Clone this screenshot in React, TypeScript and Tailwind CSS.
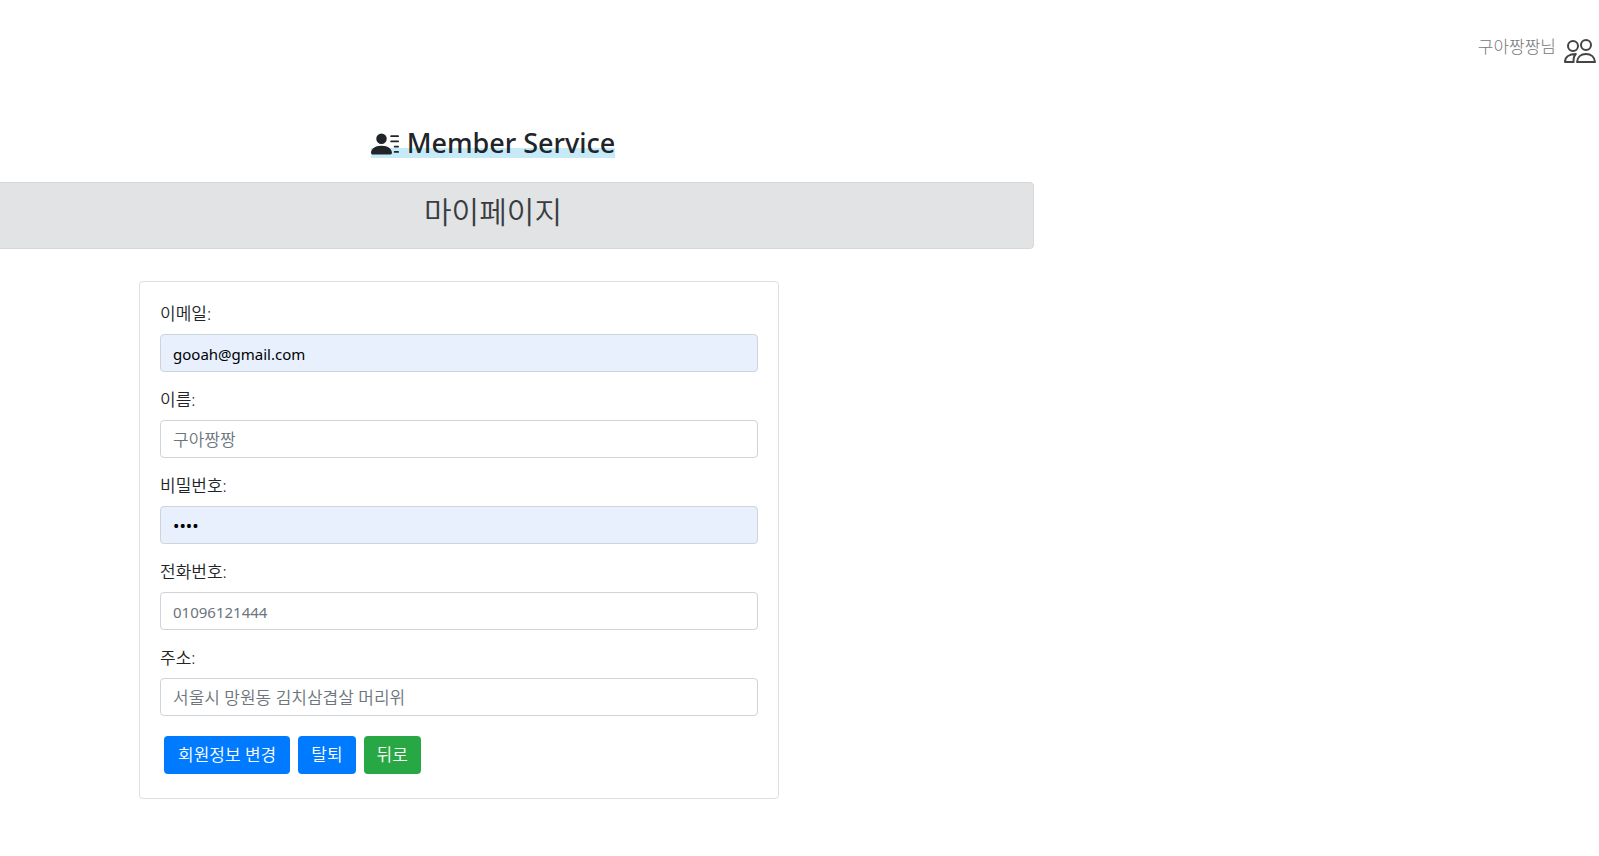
import { BsPersonLinesFill } from "react-icons/bs";

type Field = {
  id: string;
  label: string;
  type: string;
  value?: string;
  placeholder?: string;
  latin?: boolean;
};

const fields: Field[] = [
  { id: "email", label: "이메일:", type: "email", value: "gooah@gmail.com", latin: true },
  { id: "name", label: "이름:", type: "text", placeholder: "구아짱짱" },
  { id: "password", label: "비밀번호:", type: "password", value: "gooa" },
  { id: "phone", label: "전화번호:", type: "tel", placeholder: "01096121444", latin: true },
  { id: "address", label: "주소:", type: "text", placeholder: "서울시 망원동 김치삼겹살 머리위" },
];

function PeopleIcon() {
  return (
    <svg width="32" height="24" viewBox="0 0 32 24" fill="none" stroke="#444" strokeWidth="2" strokeLinejoin="round" aria-hidden="true">
      <circle cx="9" cy="7" r="5" />
      <circle cx="22" cy="6" r="5" />
      <path d="M9.6 23H1C1 18.2 4.8 15 11.8 15C10 17 9.2 19.6 9.6 23Z" />
      <path d="M13 23C13.4 18.2 16.8 15 22 15S30.6 18.2 31 23Z" />
    </svg>
  );
}

function FormField({ field }: { field: Field }) {
  return (
    <div className="mb-4">
      <label htmlFor={field.id} className="mb-2 block text-[17px] leading-6">
        {field.label}
      </label>
      <input
        id={field.id}
        type={field.type}
        defaultValue={field.value}
        placeholder={field.placeholder}
        className={`block h-[38px] w-full rounded border border-[#ced4da] px-3 placeholder:text-[#6c757d] placeholder:opacity-100 ${
          field.latin ? "pt-0.5 text-[15px] font-normal" : "text-[17px]"
        } ${field.value ? "bg-[#e8f0fe] font-normal text-black" : "bg-white"}`}
      />
    </div>
  );
}

export default function App() {
  return (
    <div className="overflow-x-hidden bg-white pb-14 font-['Noto_Sans','Noto_Sans_CJK_KR',sans-serif] font-[350] text-[#212529]">
      <header className="flex h-[122px] items-start justify-end gap-2 pt-[35px] pr-[3px]">
        <span className="text-[17px] leading-6 font-light text-[#777]">구아짱짱님</span>
        <span className="pt-1">
          <PeopleIcon />
        </span>
      </header>

      <main className="max-w-[1034px]">
        <div className="-ml-12 text-center">
          <h1 className="flex h-[60px] justify-center text-[27px] leading-[30px] font-medium">
            <span className="flex h-9 items-end gap-2 bg-linear-to-b from-transparent from-72% to-[#c6eaf8] to-72%">
              <BsPersonLinesFill size={28} aria-hidden="true" />
              Member Service
            </span>
          </h1>
          <div className="h-[67px] rounded border border-[#d6d8db] bg-[#e2e3e5] pt-[11px] text-[30px] leading-9 text-[#383d41]">
            <h2>마이페이지</h2>
          </div>
        </div>

        <form className="mt-8 ml-[139px] max-w-[640px] rounded border border-[#dfdfdf] px-5 pt-5 pb-6" onSubmit={(e) => e.preventDefault()}>
          {fields.map((field) => (
            <FormField key={field.id} field={field} />
          ))}
          <div className="flex gap-2 pt-1 pl-1 text-[17px] leading-6 text-white">
            <button type="submit" className="h-[38px] rounded bg-[#007bff] px-3.5">
              회원정보 변경
            </button>
            <button type="button" className="h-[38px] rounded bg-[#007bff] px-[13px]">
              탈퇴
            </button>
            <button type="button" className="h-[38px] rounded bg-[#28a745] px-[13px]">
              뒤로
            </button>
          </div>
        </form>
      </main>
    </div>
  );
}
